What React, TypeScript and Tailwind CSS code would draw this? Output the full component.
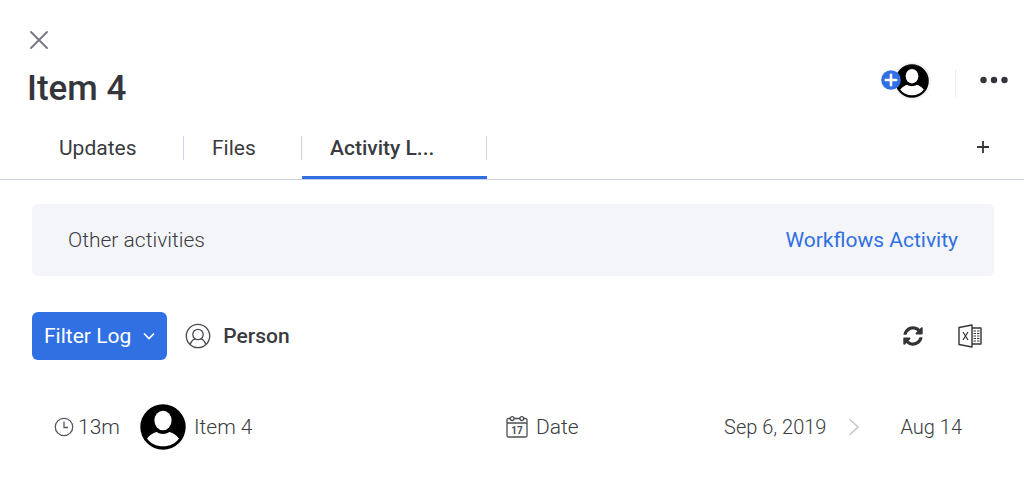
import type { ReactNode } from 'react';
import { FaSyncAlt } from 'react-icons/fa';

function Avatar({ className }: { className: string }) {
	return (
		<svg viewBox="0 0 46 46" className={className} aria-hidden="true">
			<circle cx="23" cy="23" r="22.7" fill="#000" />
			<ellipse cx="23" cy="16.5" rx="8.6" ry="9.8" fill="#fff" />
			<path
				d="M7 34.5C9.500 31.300 12.500 29.300 16.500 28c4 2.600 9 2.600 13 0 4 1.300 7 3.300 9.500 6.500C35.500 39.500 29.800 42.300 23 42.300S10.500 39.500 7 34.500z"
				fill="#fff"
			/>
		</svg>
	);
}

function CloseIcon() {
	return (
		<svg
			viewBox="0 0 20 20"
			className="size-5"
			fill="none"
			stroke="#797b80"
			strokeWidth="2"
			strokeLinecap="round"
			aria-hidden="true"
		>
			<path d="M2 2l16 16M18 2L2 18" />
		</svg>
	);
}

function PersonIcon() {
	return (
		<svg
			viewBox="0 0 26 26"
			className="size-[26px]"
			fill="none"
			stroke="#46484d"
			strokeWidth="1.3"
			aria-hidden="true"
		>
			<circle cx="13" cy="13" r="11.7" />
			<circle cx="13" cy="11.5" r="5.2" />
			<path d="M5.300 21.500c.6-3 2.200-4.700 4.700-5.700M20.700 21.500c-.6-3-2.200-4.700-4.700-5.700" />
		</svg>
	);
}

function ExcelIcon() {
	return (
		<svg
			viewBox="0 0 24 24"
			className="size-6"
			fill="none"
			stroke="#333438"
			strokeWidth="1.4"
			strokeLinejoin="round"
			aria-hidden="true"
		>
			<path d="M1 3.500L14 1v22L1 20.500z" />
			<path d="M14 4h9v16h-9" />
			<path d="M5 8l5 8M10 8l-5 8" strokeWidth="1.2" />
			<path
				d="M15.500 7h2.500M19 7h2.500M15.500 9.500h2.500M19 9.500h2.500M15.500 12h2.500M19 12h2.500M15.500 14.500h2.500M19 14.500h2.500M15.500 17h2.500M19 17h2.500"
				strokeWidth="1"
			/>
		</svg>
	);
}

function ClockIcon() {
	return (
		<svg
			viewBox="0 0 20 20"
			className="size-5"
			fill="none"
			stroke="#55575c"
			strokeWidth="1.3"
			aria-hidden="true"
		>
			<circle cx="10" cy="10" r="8.7" />
			<path d="M10 4.500v6h4" />
		</svg>
	);
}

function CalendarIcon() {
	return (
		<svg
			viewBox="0 0 22 24"
			className="h-6 w-[22px]"
			fill="none"
			stroke="#4b4d52"
			strokeWidth="1.3"
			aria-hidden="true"
		>
			<path d="M4.300 3.500H2.500Q1 3.500 1 5v15.500Q1 22 2.500 22h17q1.500 0 1.500-1.500V5q0-1.500-1.500-1.500h-1.800M8 3.500h6M1 8h20" />
			<circle cx="6.2" cy="3.6" r="1.9" />
			<circle cx="15.8" cy="3.6" r="1.9" />
			<text
				x="11"
				y="18.5"
				textAnchor="middle"
				fontSize="10"
				fontWeight="700"
				fill="#4b4d52"
				stroke="none"
			>
				17
			</text>
		</svg>
	);
}

function Tab({
	children,
	className,
	active = false,
}: {
	children: ReactNode;
	className: string;
	active?: boolean;
}) {
	return (
		<button
			type="button"
			role="tab"
			aria-selected={active}
			className={`relative flex h-[47px] items-start pt-1 text-left ${className}`}
		>
			<span className="flex h-6 w-full items-center border-r border-[#ccd3e2] pl-7">
				{children}
			</span>
			{active && (
				<span className="absolute inset-x-0 bottom-0 h-[3px] bg-[#3070e2]" />
			)}
		</button>
	);
}

export default function App() {
	return (
		<div className="bg-white font-['Roboto',sans-serif] text-[21px] leading-6 text-[#3a3b40]">
			<header className="border-b border-[#c9cfde] pt-[30px]">
				<button type="button" aria-label="Close" className="ml-[29px] block">
					<CloseIcon />
				</button>
				<div className="flex items-center justify-between pr-4 pl-[27px]">
					<h1 className="pt-[18px] text-[35px] leading-[42px] font-medium text-[#35363b]">
						Item 4
					</h1>
					<div className="flex items-center">
						<button
							type="button"
							aria-label="Add subscriber"
							className="relative mt-0.5 rounded-full bg-[#f3f3f7] p-0.5"
						>
							<Avatar className="size-[34px]" />
							<span className="absolute top-2 -left-3">
								<svg viewBox="0 0 20 20" className="size-5" aria-hidden="true">
									<circle cx="10" cy="10" r="9.8" fill="#3070e2" />
									<path
										d="M10 4.800v10.400M4.800 10h10.400"
										stroke="#fff"
										strokeWidth="2.6"
										strokeLinecap="round"
									/>
								</svg>
							</span>
						</button>
						<div className="mt-1.5 ml-6 h-7 w-px bg-[#ebebf0]" />
						<button type="button" aria-label="More options" className="ml-6">
							<svg
								viewBox="0 0 28 8"
								className="h-2 w-7"
								fill="#35363b"
								aria-hidden="true"
							>
								<circle cx="3.5" cy="4" r="3.2" />
								<circle cx="14" cy="4" r="3.2" />
								<circle cx="24.5" cy="4" r="3.2" />
							</svg>
						</button>
					</div>
				</div>
				<div className="mt-[22px] flex items-start justify-between pr-8 pl-[31px]">
					<div role="tablist" className="flex">
						<Tab className="w-[153px]">Updates</Tab>
						<Tab className="w-[118px]">Files</Tab>
						<Tab className="w-[185px] font-medium" active>
							Activity L...
						</Tab>
					</div>
					<button type="button" aria-label="Add view" className="mt-2 mr-0.5">
						<svg
							viewBox="0 0 14 14"
							className="size-3.5"
							stroke="#35363b"
							strokeWidth="1.8"
							aria-hidden="true"
						>
							<path d="M7 1v12M1 7h12" />
						</svg>
					</button>
				</div>
			</header>
			<main className="pt-6 pr-[30px] pl-8">
				<section className="flex h-[72px] items-center justify-between rounded-md bg-[#f4f5f8] px-9">
					<h2 className="font-light">Other activities</h2>
					<a href="#workflows" className="text-[#3070e2]">
						Workflows Activity
					</a>
				</section>
				<div className="mt-9 flex items-center">
					<button
						type="button"
						className="flex h-12 items-center gap-3 rounded-md bg-[#3070e2] px-3 text-white"
					>
						Filter Log
						<svg
							viewBox="0 0 12 8"
							className="h-2 w-3"
							fill="none"
							stroke="currentColor"
							strokeWidth="1.6"
							aria-hidden="true"
						>
							<path d="M1 1.500l5 5 5-5" />
						</svg>
					</button>
					<button
						type="button"
						className="ml-[18px] flex items-center gap-3 font-medium"
					>
						<PersonIcon />
						Person
					</button>
					<button type="button" aria-label="Refresh" className="ml-auto">
						<FaSyncAlt className="size-5 text-[#333438]" />
					</button>
					<button
						type="button"
						aria-label="Export to Excel"
						className="mr-3 ml-[35px]"
					>
						<ExcelIcon />
					</button>
				</div>
				<ul className="mt-11">
					<li className="flex h-[46px] items-center pr-8 pl-[22px] font-light">
						<div className="flex w-[452px] items-center">
							<ClockIcon />
							<time className="ml-1">13m</time>
							<Avatar className="ml-5 size-[46px]" />
							<span className="ml-2">Item 4</span>
						</div>
						<div className="flex items-center gap-2">
							<CalendarIcon />
							Date
						</div>
						<div className="ml-auto flex items-center text-xl">
							<span>Sep 6, 2019</span>
							<svg
								viewBox="0 0 12 18"
								className="mr-10 ml-[22px] h-[18px] w-3"
								fill="none"
								stroke="#c6c7ca"
								strokeWidth="1.6"
								aria-hidden="true"
							>
								<path d="M1.500 1l8.500 8-8.500 8" />
							</svg>
							<span>Aug 14</span>
						</div>
					</li>
				</ul>
			</main>
		</div>
	);
}
